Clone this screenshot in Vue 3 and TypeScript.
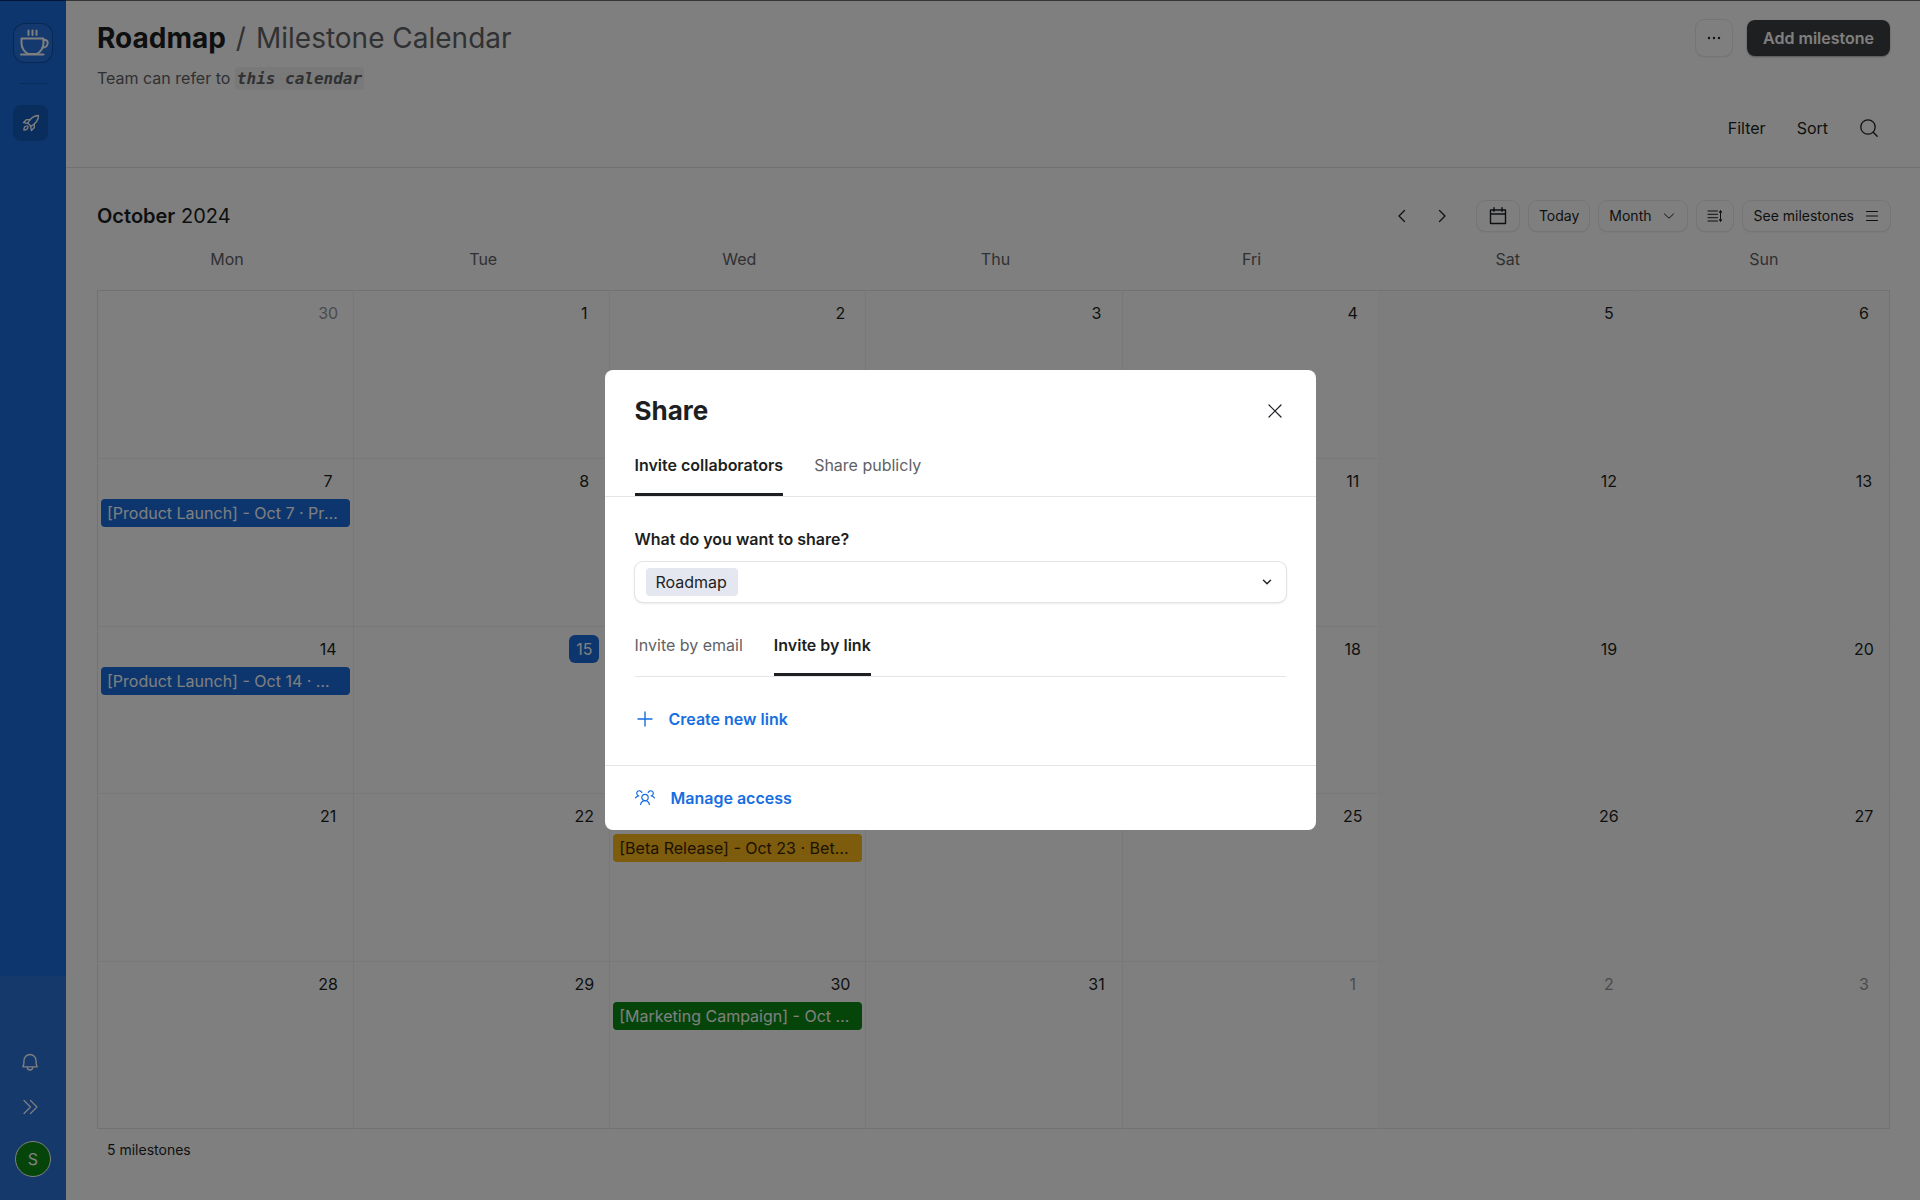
<script setup lang="ts">
import { ref } from 'vue'

interface Milestone {
  title: string
  tone: 'blue' | 'yellow' | 'green'
}

interface Day {
  label: number
  outside: boolean
  today: boolean
  milestone?: Milestone
}

const weekdays = ['Mon', 'Tue', 'Wed', 'Thu', 'Fri', 'Sat', 'Sun']

const milestones: Record<number, Milestone> = {
  7: { title: '[Product Launch] - Oct 7 · Product Launch', tone: 'blue' },
  14: { title: '[Product Launch] - Oct 14 · Product Launch', tone: 'blue' },
  23: { title: '[Beta Release] - Oct 23 · Beta Release', tone: 'yellow' },
  30: { title: '[Marketing Campaign] - Oct 30 · Marketing Campaign', tone: 'green' },
}

const daysInMonth = 31
const todayDate = 15

// The month starts on a Tuesday, so the first cell is September 30.
const weeks: Day[][] = Array.from({ length: 5 }, (_, week) =>
  Array.from({ length: 7 }, (_, weekday) => {
    const date = week * 7 + weekday
    const outside = date < 1 || date > daysInMonth
    const label = date < 1 ? 30 + date : date > daysInMonth ? date - daysInMonth : date
    return { label, outside, today: date === todayDate, milestone: outside ? undefined : milestones[date] }
  }),
)

const shareTabs = ['Invite collaborators', 'Share publicly']
const inviteTabs = ['Invite by email', 'Invite by link']
const shareTab = ref(shareTabs[0])
const inviteTab = ref(inviteTabs[1])
const shareTarget = ref('Roadmap')
const dialogOpen = ref(true)
</script>

<template>
  <div class="app">
    <nav class="sidebar" aria-label="Workspace">
      <div class="sidebar-top">
        <a class="logo" href="#" aria-label="Home">
          <svg viewBox="0 0 40 40" width="40" height="40" stroke-width="2">
            <path d="M8.500 15.500h22v4.500c0 5-3 9.500-7 11h-8c-4-1.500-7-6-7-11z" />
            <path d="M30.500 17h1.500c2 0 3 1.600 2.600 3.600-.5 2.600-2.200 4-4.900 4" />
            <path d="M8 31.500h22.500M15.500 7.500v4.500M19.500 7.500v4.500M23.500 7.500v4.500" />
          </svg>
        </a>
        <span class="rule"></span>
        <a class="nav-item" href="#" aria-label="Roadmap">
          <svg viewBox="0 0 24 24" width="20" height="20" stroke-width="1.600">
            <path d="M21 3c-6 0-9.500 3-13 9l4 4c6-3.500 9-7 9-13z" />
            <path d="M11 8H6.500L3 11.500l5 1M16 13v4.500L12.500 21l-1-5M7.500 15.500c-2.500.2-4 2.300-4 5 2.500 0 4.800-1.300 5-4" />
          </svg>
        </a>
      </div>
      <div class="sidebar-bottom">
        <button class="side-btn" type="button" aria-label="Notifications">
          <svg viewBox="0 0 20 20" width="20" height="20" stroke-width="1.300">
            <path d="M2.800 14.800c1.200-1.600 1.200-3.500 1.200-6.300a6 6 0 0 1 12 0c0 2.800 0 4.700 1.200 6.300z" />
            <path d="M7.300 15.300a2.700 2.700 0 0 0 5.400 0" />
          </svg>
        </button>
        <button class="side-btn" type="button" aria-label="Expand sidebar">
          <svg viewBox="0 0 20 20" width="20" height="20" stroke-width="1.200">
            <path d="M4 3.500l6.500 6.500L4 16.500M10.500 3.500L17 10l-6.500 6.500" />
          </svg>
        </button>
        <button class="avatar" type="button" aria-label="Account">S</button>
      </div>
    </nav>

    <main class="main">
      <header class="header">
        <div class="title-row">
          <h1>
            <strong>Roadmap</strong><span class="slash">/</span><span class="page">Milestone Calendar</span>
          </h1>
          <div class="title-actions">
            <button class="outline more" type="button" aria-label="More options">
              <svg viewBox="0 0 16 16" width="16" height="16" class="solid">
                <circle cx="3" cy="8" r="1.200" /><circle cx="8" cy="8" r="1.200" /><circle cx="13" cy="8" r="1.200" />
              </svg>
            </button>
            <button class="primary" type="button">Add milestone</button>
          </div>
        </div>
        <p class="subtitle">Team can refer to <code>this calendar</code></p>
        <div class="filters">
          <button type="button">Filter</button>
          <button type="button">Sort</button>
          <button type="button" aria-label="Search">
            <svg viewBox="0 0 20 20" width="20" height="20" stroke-width="1.300">
              <circle cx="9" cy="9" r="7.200" />
              <path d="M14.200 14.200l4 4" />
            </svg>
          </button>
        </div>
      </header>

      <section class="calendar">
        <div class="toolbar">
          <h2><strong>October</strong> 2024</h2>
          <div class="tools">
            <button class="arrow" type="button" aria-label="Previous month">
              <svg viewBox="0 0 16 16" width="16" height="16" stroke-width="1.300"><path d="M10.500 2.500L5 8l5.500 5.500" /></svg>
            </button>
            <button class="arrow" type="button" aria-label="Next month">
              <svg viewBox="0 0 16 16" width="16" height="16" stroke-width="1.300"><path d="M5.500 2.500L11 8l-5.500 5.500" /></svg>
            </button>
            <button class="outline tool date" type="button" aria-label="Pick a date">
              <svg viewBox="0 0 18 18" width="18" height="18" stroke-width="1.400">
                <path d="M1.500 3h15v13.500h-15zM1.500 7h15M5 .7v3.600M13 .7v3.600" />
              </svg>
            </button>
            <button class="outline tool" type="button">Today</button>
            <button class="outline tool" type="button">
              Month
              <svg class="caret" viewBox="0 0 12 12" width="12" height="12" stroke-width="1"><path d="M1.500 4L6 8.200 10.500 4" /></svg>
            </button>
            <button class="outline tool" type="button" aria-label="Row height">
              <svg viewBox="0 0 16 16" width="16" height="16" stroke-width="1">
                <path d="M1 3h9.500M1 6.300h9.500M1 9.700h9.500M1 13h9.500M13.500 3v10" />
                <path d="M12.500 4l1-1.500 1 1.500zM12.500 12l1 1.500 1-1.500z" />
              </svg>
            </button>
            <button class="outline tool" type="button">
              See milestones
              <svg class="lines" viewBox="0 0 12 12" width="12" height="12" stroke-width="1"><path d="M.5 1.500h11M.5 6h11M.5 10.500h11" /></svg>
            </button>
          </div>
        </div>

        <table class="month">
          <thead>
            <tr>
              <th v-for="name in weekdays" :key="name" scope="col">{{ name }}</th>
            </tr>
          </thead>
          <tbody>
            <tr v-for="(week, w) in weeks" :key="w">
              <td v-for="(day, d) in week" :key="d" :class="{ weekend: d > 4 }">
                <div class="cell">
                  <span class="num" :class="{ outside: day.outside, today: day.today }">{{ day.label }}</span>
                  <a v-if="day.milestone" href="#" class="event" :class="day.milestone.tone">{{ day.milestone.title }}</a>
                </div>
              </td>
            </tr>
          </tbody>
        </table>
        <p class="count">5 milestones</p>
      </section>
    </main>

    <div v-if="dialogOpen" class="backdrop">
      <div class="dialog" role="dialog" aria-modal="true" aria-labelledby="share-title">
        <div class="dialog-head">
          <h2 id="share-title">Share</h2>
          <button class="close" type="button" aria-label="Close" @click="dialogOpen = false">
            <svg viewBox="0 0 16 16" width="16" height="16" stroke-width="1.200"><path d="M2 2l12 12M14 2L2 14" /></svg>
          </button>
        </div>
        <div class="tabs wide" role="tablist">
          <button
            v-for="tab in shareTabs"
            :key="tab"
            type="button"
            role="tab"
            :aria-selected="tab === shareTab"
            :class="{ active: tab === shareTab }"
            @click="shareTab = tab"
          >{{ tab }}</button>
        </div>
        <div class="dialog-body">
          <label class="field-label" for="share-target">What do you want to share?</label>
          <div class="field">
            <select id="share-target" v-model="shareTarget">
              <option>Roadmap</option>
            </select>
            <svg viewBox="0 0 12 12" width="12" height="12" stroke-width="1.400"><path d="M2.500 4.300L6 7.800l3.500-3.500" /></svg>
          </div>
          <div class="tabs" role="tablist">
            <button
              v-for="tab in inviteTabs"
              :key="tab"
              type="button"
              role="tab"
              :aria-selected="tab === inviteTab"
              :class="{ active: tab === inviteTab }"
              @click="inviteTab = tab"
            >{{ tab }}</button>
          </div>
          <button class="link-btn" type="button">
            <svg viewBox="0 0 20 20" width="20" height="20" stroke-width="1.400"><path d="M10 3v14M3 10h14" /></svg>
            Create new link
          </button>
        </div>
        <div class="dialog-foot">
          <button class="link-btn" type="button">
            <svg viewBox="0 0 20 20" width="20" height="20" stroke-width="1.200">
              <circle cx="10" cy="9.500" r="3.200" />
              <path d="M5.500 16.500c.8-2.300 2.500-3.800 4.500-3.800s3.700 1.500 4.500 3.800" />
              <path d="M6.800 4.500a2.600 2.600 0 1 0-3 3.400C2.400 8.100 1.200 8.800.6 9.900M13.200 4.500a2.600 2.600 0 1 1 3 3.400c1.400.2 2.600.9 3.200 2" />
            </svg>
            Manage access
          </button>
        </div>
      </div>
    </div>
  </div>
</template>

<style>
body {
  margin: 0;
}
</style>

<style scoped>
.app {
  display: flex;
  min-height: 100vh;
  background: #fff;
  color: #1d1f22;
  font-family: Inter, "Liberation Sans", sans-serif;
  font-size: 16px;
  line-height: 24px;
}

.app * {
  box-sizing: border-box;
}

button {
  margin: 0;
  padding: 0;
  border: 0;
  background: none;
  color: inherit;
  font: inherit;
  cursor: pointer;
}

svg {
  display: block;
  flex: none;
  fill: none;
  stroke: currentColor;
  stroke-linecap: round;
  stroke-linejoin: round;
}

svg.solid {
  fill: currentColor;
  stroke: none;
}

h1,
h2,
p {
  margin: 0;
  font-weight: 400;
}

/* Sidebar */
.sidebar {
  display: flex;
  flex: none;
  flex-direction: column;
  width: 66px;
  border-top: 1px solid #0a2a66;
  background: #196ddb;
  color: #fff;
}

.sidebar-top {
  display: flex;
  flex: 1;
  flex-direction: column;
  align-items: flex-start;
  padding: 22px 0 0 13px;
}

.logo {
  border-radius: 12px;
  background: #2672dc;
  box-shadow: inset 0 0 0 1px #0f4fa8;
  color: #fff;
}

.rule {
  width: 28px;
  height: 1px;
  margin: 20px 0 21px 7px;
  background: #105abb;
}

.nav-item {
  display: flex;
  align-items: center;
  justify-content: center;
  width: 35px;
  height: 36px;
  border-radius: 8px;
  background: #125abb;
  color: #fff;
}

.sidebar-bottom {
  display: flex;
  flex-direction: column;
  align-items: center;
  height: 224px;
  padding: 63px 6px 0 0;
  background: #2d72d8;
}

.side-btn {
  display: flex;
  align-items: center;
  justify-content: center;
  width: 36px;
  height: 45px;
}

.avatar {
  width: 36px;
  height: 36px;
  margin: 12px 0 0 6px;
  border: 1px solid #fff;
  border-radius: 50%;
  background: #0a8a12;
}

/* Header */
.main {
  flex: 1;
  min-width: 0;
  border-top: 1px solid #6a6a6a;
}

.header {
  height: 167px;
  padding: 18px 30px 0 31px;
  border-bottom: 1px solid #e2e2e2;
}

.title-row {
  display: flex;
  justify-content: space-between;
  height: 38px;
}

h1 {
  color: #616266;
  font-size: 28px;
  line-height: 38px;
}

h1 strong {
  color: #1d1f22;
  font-weight: 700;
}

.slash {
  margin: 0 10px;
}

.title-actions {
  display: flex;
  align-items: center;
  gap: 15px;
}

.outline {
  display: flex;
  align-items: center;
  justify-content: center;
  border-radius: 8px;
  box-shadow: 0 0 0 1px #ebebeb, 0 1px 2px #dcdcdc;
}

.more {
  width: 36px;
  height: 36px;
}

.primary {
  height: 36px;
  padding: 0 16px;
  border-radius: 8px;
  background: #3c3e40;
  color: #fff;
  font-weight: 600;
  box-shadow: 0 1px 2px #aaa;
}

.subtitle {
  height: 24px;
  margin-top: 9px;
  color: #616266;
}

.subtitle code {
  padding: 2px;
  border-radius: 4px;
  background: #f2f2f2;
  font-family: "DejaVu Sans Mono", monospace;
  font-size: 16px;
  font-style: italic;
  font-weight: 700;
}

.filters {
  display: flex;
  align-items: center;
  justify-content: flex-end;
  gap: 31px;
  margin-top: 26px;
  padding-right: 11px;
}

/* Calendar */
.calendar {
  padding: 31px 30px 0 31px;
}

.toolbar,
.tools {
  display: flex;
  align-items: center;
}

.toolbar {
  justify-content: space-between;
  height: 34px;
}

.toolbar h2 {
  font-size: 20px;
  line-height: 28px;
}

.toolbar strong {
  font-weight: 600;
}

.tools {
  gap: 10px;
  font-size: 14px;
}

.arrow {
  display: flex;
  align-items: center;
  justify-content: center;
  width: 30px;
  height: 30px;
}

.tool {
  height: 30px;
  padding: 0 10px;
}

.date {
  margin-left: 10px;
  padding: 0 12px;
}

.caret {
  margin: 0 2px 0 12px;
}

.lines {
  margin: 0 2px 0 12px;
}

.month {
  width: 100%;
  margin-top: 7px;
  border-collapse: separate;
  border-spacing: 0;
  table-layout: fixed;
}

th {
  height: 50px;
  padding: 0 0 12px 4px;
  color: #616266;
  font-weight: 400;
}

td {
  height: calc((100vh - 361px) / 5);
  padding: 0;
  border-top: 1px solid #f1f1f1;
  border-left: 1px solid #f1f1f1;
  vertical-align: top;
}

td.weekend {
  border-color: #f8f8f8;
  background: #fbfbfb;
}

td:first-child {
  border-left-color: #e4e4e4;
}

td:last-child {
  border-right: 1px solid #e4e4e4;
}

tbody tr:first-child td {
  border-top-color: #e4e4e4;
}

tbody tr:last-child td {
  border-bottom: 1px solid #e4e4e4;
}

.cell {
  display: flex;
  flex-direction: column;
  gap: 4px;
  padding: 8px 3px 0;
}

.num {
  align-self: flex-end;
  width: 30px;
  height: 28px;
  margin-right: 7px;
  border-radius: 6px;
  line-height: 28px;
  text-align: center;
}

.num.outside {
  color: #95979a;
}

.num.today {
  background: #196ddb;
  color: #fff;
}

.event {
  height: 28px;
  padding: 0 11px 0 6px;
  overflow: hidden;
  border-radius: 4px;
  line-height: 28px;
  text-decoration: none;
  text-overflow: ellipsis;
  white-space: nowrap;
}

.event.blue {
  background: #196ddb;
  color: #fff;
}

.event.yellow {
  background: #fbb81c;
  color: #3b2501;
}

.event.green {
  background: #0a8a12;
  color: #fff;
}

.count {
  padding: 9px 10px 0;
  font-size: 14px;
}

/* Share dialog */
.backdrop {
  position: fixed;
  inset: 0;
  display: flex;
  align-items: center;
  justify-content: center;
  background: rgba(0, 0, 0, 0.5);
}

.dialog {
  width: 711px;
  max-width: calc(100% - 32px);
  border-radius: 8px;
  background: #fff;
}

.dialog-head {
  display: flex;
  align-items: center;
  justify-content: space-between;
  padding: 23px 30px 0;
}

.dialog-head h2 {
  font-size: 26px;
  font-weight: 700;
  line-height: 36px;
}

.close {
  padding: 3px;
}

.tabs {
  display: flex;
  gap: 31px;
  border-bottom: 1px solid #e5e5e5;
}

.tabs.wide {
  padding: 24px 30px 0;
}

.tabs button {
  padding: 0 0 16px;
  border-bottom: 3px solid transparent;
  color: #616266;
}

.tabs button.active {
  border-color: #1d1f22;
  color: #1d1f22;
  font-weight: 600;
}

.dialog-body {
  padding: 30px 30px 34px;
}

.field-label {
  display: block;
  font-weight: 600;
}

.field {
  display: flex;
  align-items: center;
  justify-content: space-between;
  height: 40px;
  margin: 11px 0 31px;
  padding: 0 13px 0 11px;
  border-radius: 8px;
  box-shadow: 0 0 0 1px #e2e4e8, 0 1px 3px #d8d8d8;
}

.field select {
  height: 28px;
  padding: 0 10px;
  appearance: none;
  border: 0;
  border-radius: 4px;
  background: #e5e7f0;
  color: #1d1f22;
  font: inherit;
}

.link-btn {
  display: flex;
  align-items: center;
  gap: 14px;
  color: #166ee1;
  font-weight: 600;
}

.dialog-body .link-btn {
  margin-top: 30px;
}

.dialog-foot {
  padding: 20px 30px;
  border-top: 1px solid #e5e5e5;
}

.dialog-foot .link-btn {
  gap: 16px;
}
</style>
